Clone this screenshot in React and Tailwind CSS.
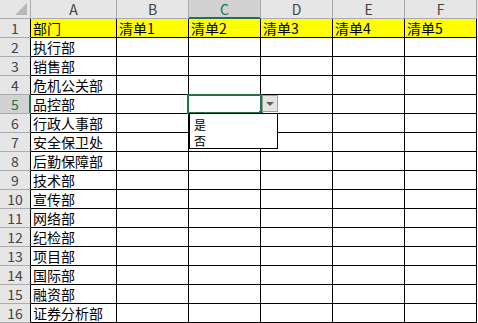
import React from 'react';

const columns = ['A', 'B', 'C', 'D', 'E', 'F'];

const headerRow = ['部门', '清单1', '清单2', '清单3', '清单4', '清单5'];

const departments = [
  '执行部',
  '销售部',
  '危机公关部',
  '品控部',
  '行政人事部',
  '安全保卫处',
  '后勤保障部',
  '技术部',
  '宣传部',
  '网络部',
  '纪检部',
  '项目部',
  '国际部',
  '融资部',
  '证券分析部',
];

const colWidth = ['w-[86px]', 'w-[72px]', 'w-[72px]', 'w-[72px]', 'w-[72px]', 'w-[72px]'];

function App() {
  const rows = [headerRow, ...departments.map((d) => [d, '', '', '', '', ''])];

  return (
    <div className="relative h-[323px] w-[478px] overflow-hidden bg-white font-['Noto_Sans_CJK_SC','Noto_Sans',sans-serif] text-[14px] leading-[14px] text-black">
      {/* Column headers */}
      <div className="flex h-[19px] bg-[#e6e6e6]">
        <div className="relative h-[19px] w-[31px] border-r border-b border-[#ababab]">
          <div className="absolute right-[3px] bottom-[3px] h-0 w-0 border-l-[12px] border-b-[12px] border-l-transparent border-b-[#b7b7b7]" />
        </div>
        {columns.map((c, i) => (
          <div
            key={c}
            className={`flex h-[19px] items-center justify-center border-r border-b border-r-[#ababab] ${colWidth[i]} ${
              c === 'C'
                ? 'border-b-[#217346] bg-[#d2d2d2] text-[#217346] shadow-[inset_0_-1px_0_#217346]'
                : 'border-b-[#ababab] text-[#444444]'
            }`}
          >
            {c}
          </div>
        ))}
      </div>

      {/* Rows */}
      {rows.map((row, r) => (
        <div key={r} className="flex h-[19px]">
          <div
            className={`flex h-[19px] w-[31px] items-center justify-center border-r border-b border-b-[#ababab] ${
              r === 4
                ? 'border-r-[#217346] bg-[#d2d2d2] text-[#217346] shadow-[inset_-1px_0_0_#217346]'
                : 'border-r-black bg-[#e6e6e6] text-[#444444]'
            }`}
          >
            {r + 1}
          </div>
          {row.map((cell, i) => (
            <div
              key={i}
              className={`flex h-[19px] items-center border-r border-b border-black px-[2px] ${colWidth[i]} ${
                r === 0 ? 'bg-[#ffff00]' : ''
              }`}
            >
              <span className="whitespace-nowrap">{cell}</span>
            </div>
          ))}
        </div>
      ))}

      {/* Active cell C5 */}
      <div className="absolute top-[94px] left-[187px] h-[20px] w-[75px] border-2 border-[#217346]" />
      <div className="absolute top-[111px] left-[259px] h-[4px] w-[4px] bg-[#217346]" />

      {/* Dropdown button */}
      <div className="absolute top-[95px] left-[262px] flex h-[17px] w-[16px] items-center justify-center border border-[#a0a0a0] bg-[#e4e4e4]">
        <div className="h-0 w-0 border-x-[4px] border-t-[4px] border-x-transparent border-t-[#606060]" />
      </div>

      {/* Dropdown list */}
      <div className="absolute top-[113px] left-[189px] flex h-[36px] w-[89px] flex-col border border-black bg-white pt-[3px] pl-[4px] text-[12px]">
        <div className="h-[16px] leading-[16px]">是</div>
        <div className="h-[16px] leading-[16px]">否</div>
      </div>
    </div>
  );
}

export default App;
